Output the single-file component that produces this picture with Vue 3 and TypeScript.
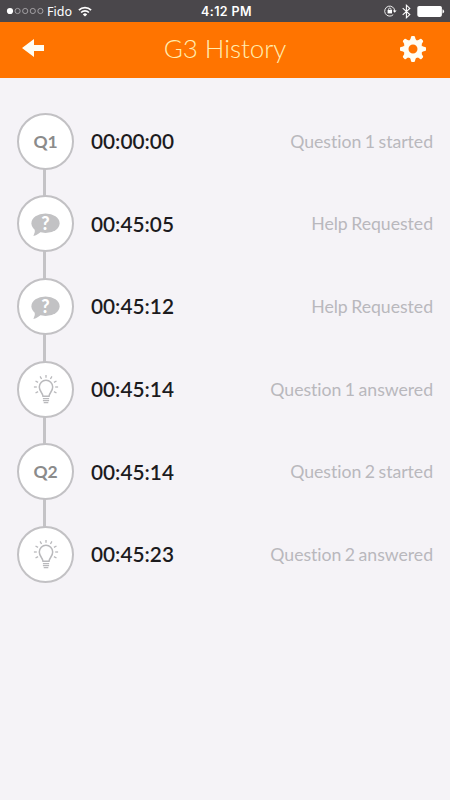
<script setup lang="ts">
type Kind = 'label' | 'help' | 'answer'

interface HistoryEvent {
  id: number
  kind: Kind
  label?: string
  time: string
  text: string
}

const events: HistoryEvent[] = [
  { id: 1, kind: 'label', label: 'Q1', time: '00:00:00', text: 'Question 1 started' },
  { id: 2, kind: 'help', time: '00:45:05', text: 'Help Requested' },
  { id: 3, kind: 'help', time: '00:45:12', text: 'Help Requested' },
  { id: 4, kind: 'answer', time: '00:45:14', text: 'Question 1 answered' },
  { id: 5, kind: 'label', label: 'Q2', time: '00:45:14', text: 'Question 2 started' },
  { id: 6, kind: 'answer', time: '00:45:23', text: 'Question 2 answered' },
]

const teeth = [0, 45, 90, 135, 180, 225, 270, 315]
const rays = [-120, -90, -60, -29, 0, 29, 60, 90, 120]
</script>

<template>
  <div class="screen">
    <div class="status">
      <div class="carrier">
        <svg class="dots" width="38" height="8" viewBox="0 0 38 8">
          <circle cx="4" cy="4" r="3.1" fill="#fff" />
          <circle v-for="n in 4" :key="n" :cx="4 + n * 7.6" cy="4" r="2.6" fill="none" stroke="#b5b3b6" stroke-width="0.8" />
        </svg>
        <span class="carrier-name">Fido</span>
        <svg class="wifi" width="14" height="11" viewBox="0 0 14 11" fill="none" stroke="#fff" stroke-width="1.7">
          <path d="M0.9 4.2 A8.6 8.6 0 0 1 13.1 4.2" />
          <path d="M3.1 6.5 A5.5 5.5 0 0 1 10.9 6.5" />
          <path d="M7 10.6 L4.8 8.4 A3.1 3.1 0 0 1 9.2 8.4 Z" fill="#fff" stroke="none" />
        </svg>
      </div>
      <span class="clock">4:12 PM</span>
      <div class="indicators">
        <svg width="13" height="12" viewBox="0 0 13 12" fill="none" stroke="#fff">
          <path d="M9.2 9.7 A5 5 0 1 1 10.7 6" stroke-width="0.9" />
          <path d="M8.8 5.5 H12.6 L10.7 7.7 Z" fill="#fff" stroke="none" />
          <rect x="3.6" y="5" width="4.4" height="3.4" fill="#fff" stroke="none" />
          <path d="M4.6 5.2 V4.2 A1.2 1.2 0 0 1 7 4.2 V5.2" stroke-width="0.8" />
        </svg>
        <svg class="bluetooth" width="9" height="15" viewBox="0 0 9 15" fill="none" stroke="#fff" stroke-width="1.1">
          <path d="M0.7 4.2 L7.8 10.6 L4.4 13.8 V1.2 L7.8 4.4 L0.7 10.8" />
        </svg>
        <svg class="battery" width="28" height="13" viewBox="0 0 28 13">
          <rect x="0.3" y="0.9" width="24.6" height="11" rx="1.8" fill="#fff" />
          <path d="M25.5 4.3 Q27.1 4.8 27.1 6.4 Q27.1 8 25.5 8.5 Z" fill="#fff" />
        </svg>
      </div>
    </div>

    <header class="navbar">
      <button class="nav-button" aria-label="Back">
        <svg width="22" height="18" viewBox="0 0 22 18">
          <path d="M0 9 L12 0 V6 H22 V12 H12 V18 Z" fill="#fffdf3" />
        </svg>
      </button>
      <h1 class="title">G3 History</h1>
      <button class="nav-button" aria-label="Settings">
        <svg width="26" height="26" viewBox="-13 -13 26 26">
          <path
            v-for="a in teeth"
            :key="a"
            d="M-3.6 -8.6 Q-2.3 -9.6 -2 -12 Q-1.8 -13 -1 -13 H1 Q1.8 -13 2 -12 Q2.3 -9.6 3.6 -8.6 Z"
            :transform="`rotate(${a})`"
            fill="#fffdf3"
          />
          <circle r="7" fill="none" stroke="#fffdf3" stroke-width="5" />
        </svg>
      </button>
    </header>

    <main class="timeline">
      <div v-for="event in events" :key="event.id" class="row">
        <div class="node">
          <span v-if="event.kind === 'label'" class="node-label">{{ event.label }}</span>
          <div v-else-if="event.kind === 'help'" class="bubble">
            <svg width="29" height="24" viewBox="0 0 29 24">
              <ellipse cx="14.5" cy="10.2" rx="14.1" ry="9.8" fill="#c2c2c4" />
              <path d="M3.6 14 Q4.6 18.6 2.4 22.9 Q7.6 21.8 10.3 18 Z" fill="#c2c2c4" />
            </svg>
            <span class="mark">?</span>
          </div>
          <svg v-else width="26" height="30" viewBox="-13 -13 26 30" fill="none" stroke="#b9b9bc">
            <path
              d="M-3 9.3 C-3 6 -6.7 4.6 -6.7 0 A6.7 6.7 0 0 1 6.7 0 C6.7 4.6 3 6 3 9.3 Z"
              stroke-width="1.5"
            />
            <path d="M-3.1 11.7 H3.1 M-3.1 13.7 H3.1 M-2.3 15.7 H2.3" stroke-width="1.2" />
            <path
              v-for="a in rays"
              :key="a"
              d="M0 -9.2 V-12.1"
              :transform="`rotate(${a})`"
              stroke-width="1.3"
            />
          </svg>
        </div>
        <span class="time">{{ event.time }}</span>
        <span class="text">{{ event.text }}</span>
      </div>
    </main>
  </div>
</template>

<style>
body {
  background: #f5f3f7;
}
</style>

<style scoped>
.screen {
  width: 450px;
  height: 800px;
  overflow: hidden;
  background: #f5f3f7;
  font-family: Lato, 'Liberation Sans', sans-serif;
  font-variant-ligatures: none;
}

.status {
  display: grid;
  grid-template-columns: 1fr auto 1fr;
  align-items: center;
  box-sizing: border-box;
  height: 22px;
  padding: 0 5px 0 6px;
  background: #4a474b;
  color: #fff;
}

.carrier {
  display: flex;
  align-items: center;
}

.carrier-name {
  margin: 1px 0 0 3px;
  font: 12.5px/16px 'Noto Sans', sans-serif;
}

.wifi {
  margin-left: 6px;
}

.clock {
  margin: 1px 0 0 2px;
  font: 600 12.5px/16px Inter, sans-serif;
  letter-spacing: 0.4px;
}

.indicators {
  display: flex;
  align-items: center;
  justify-content: flex-end;
}

.bluetooth {
  margin-left: 5px;
}

.battery {
  margin-left: 6px;
}

.navbar {
  display: grid;
  grid-template-columns: 1fr auto 1fr;
  align-items: center;
  box-sizing: border-box;
  height: 56px;
  padding: 0 24px 2px 22px;
  background: #ff7400;
}

.nav-button {
  display: flex;
  padding: 0;
  border: 0;
  background: none;
}

.nav-button:first-child {
  margin-top: -3px;
}

.nav-button:last-child {
  justify-self: end;
}

.title {
  margin: -2px 0 0 2px;
  color: #ffedb0;
  font-size: 26px;
  font-weight: 300;
  line-height: 34px;
  letter-spacing: -0.05px;
}

.timeline {
  padding: 22px 17px 0 17px;
  background: linear-gradient(#c4c3c6, #c4c3c6) 43px 63px / 3px 413px no-repeat;
}

.row {
  display: flex;
  align-items: center;
  height: 82.6px;
}

.node {
  display: flex;
  align-items: center;
  justify-content: center;
  box-sizing: border-box;
  width: 57px;
  height: 57px;
  border: 2px solid #c2c1c4;
  border-radius: 50%;
  background: #fff;
}

.node-label {
  color: #8b8b8b;
  font-size: 17.5px;
  font-weight: 700;
  letter-spacing: -0.2px;
}

.bubble {
  display: grid;
  place-items: start center;
  margin-top: 3px;
}

.bubble > * {
  grid-area: 1 / 1;
}

.mark {
  color: #fff;
  font-size: 18px;
  font-weight: 900;
  line-height: 20px;
}

.time {
  margin: -1px 0 0 17px;
  color: #1c1b1e;
  font-size: 20.8px;
  font-weight: 600;
}

.text {
  margin-left: auto;
  color: #b9b8bd;
  font-size: 17.7px;
  letter-spacing: -0.04px;
  word-spacing: -1px;
}
</style>
